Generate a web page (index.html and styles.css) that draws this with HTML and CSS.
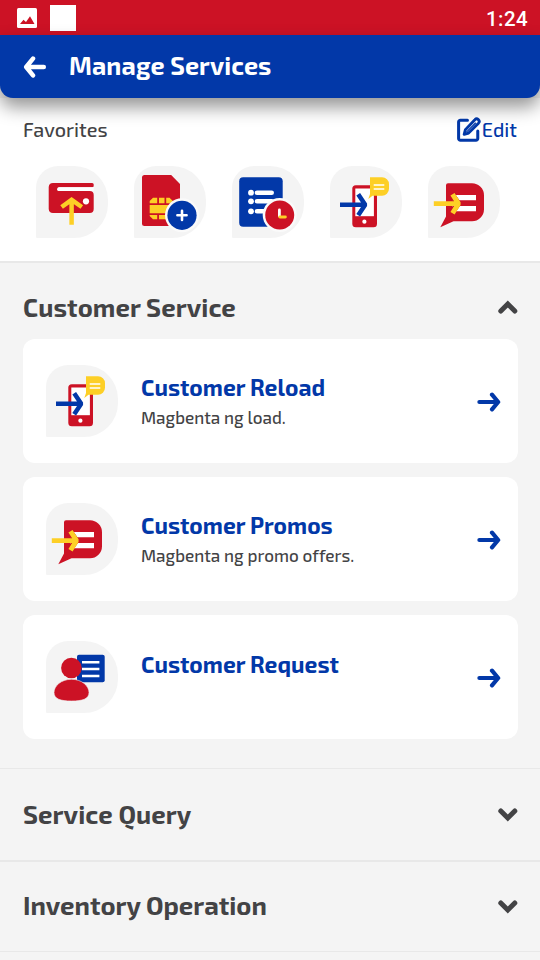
FILE: index.html
```html
<!DOCTYPE html>
<html lang="en">
<head>
<meta charset="utf-8">
<title>Manage Services</title>
<link rel="stylesheet" href="styles.css">
</head>
<body>
<svg class="sprite" aria-hidden="true">
  <symbol id="card" viewBox="0 0 72 72">
    <path fill="#cc1225" d="M17 17h39.200a1.500 1.500 0 0 1 1.500 1.500v1.300a1.500 1.500 0 0 1-1.500 1.500H23.200a1.900 1.900 0 0 0 0 3.800h30.500a4 4 0 0 1 4 4V43a4 4 0 0 1-4 4H17a4.300 4.300 0 0 1-4.300-4V21a4.300 4.300 0 0 1 4.300-4z"/>
    <path fill="#fff" d="M57.700 21.300H23.200a1.900 1.900 0 0 0 0 3.800h34.500z"/>
    <circle cx="50" cy="35.300" r="3.100" fill="#fff"/>
    <path fill="none" stroke="#fdcf26" stroke-width="4.500" d="M35.600 58.800V35M25.600 41l10-7.200 10.200 7.200"/>
  </symbol>
  <symbol id="sim" viewBox="0 0 72 72">
    <path fill="#cc1225" d="M10.500 9h26.700L46 18v39.500a2.500 2.500 0 0 1-2.500 2.500h-33A2.500 2.500 0 0 1 8 57.500V11.500A2.500 2.500 0 0 1 10.500 9z"/>
    <path fill="#fdcf26" d="M19 31.700h4.200v5.500h-7.500V35zM25 31.700h5.500v5.500H25zM32.200 31.700h3.300l3.300 3.300v2.200h-6.600zM15.700 39h24v8.300h-24zM15.700 49h7.500v4.200H19l-3.300-3.300zM25 49h8v4.200h-8z"/>
    <circle cx="48" cy="49.300" r="17" fill="#fafafa"/>
    <circle cx="48" cy="49.300" r="14.600" fill="#0238a8"/>
    <path stroke="#fff" stroke-width="2.600" stroke-linecap="round" d="M48 44.700v9.200M43.400 49.300h9.200"/>
  </symbol>
  <symbol id="list" viewBox="0 0 72 72">
    <rect x="7.200" y="11.300" width="43.500" height="49.400" rx="4" fill="#0238a8"/>
    <g fill="#fff"><circle cx="19" cy="26.700" r="2.900"/><circle cx="19" cy="35.300" r="2.900"/><circle cx="19" cy="45.300" r="2.900"/></g>
    <path stroke="#fff" stroke-width="4.600" stroke-linecap="round" d="M25 26.700h14.700M25 35.300h14.700M25 45.300h9"/>
    <circle cx="47.700" cy="49" r="17" fill="#fafafa"/>
    <circle cx="47.700" cy="49" r="14.500" fill="#cc1225"/>
    <path fill="none" stroke="#fff" stroke-width="2.800" stroke-linecap="round" d="M47.400 44v6"/>
    <path fill="none" stroke="#fdcf26" stroke-width="2.800" stroke-linecap="round" d="M47.800 51h5.600"/>
  </symbol>
  <symbol id="reload" viewBox="0 0 72 72">
    <rect x="22.300" y="19.200" width="24.700" height="42" rx="3.500" fill="#cc1225"/>
    <rect x="25.300" y="22.500" width="18.600" height="27.700" fill="#fff"/>
    <circle cx="34.400" cy="55.700" r="2.100" fill="#fff"/>
    <path fill="none" stroke="#0238a8" stroke-width="4.500" stroke-linejoin="bevel" d="M10 38.700h24M28.200 28.300l7 10.400-7 10.500"/>
    <path fill="#fdcf26" d="M40 11.300h12a7 7 0 0 1 7 7v4.400a7 7 0 0 1-7 7h-9.500L38.300 33l1.700-5z"/>
    <path stroke="#fff" stroke-width="1.700" d="M43.700 19h10.600M43.700 23h10.600"/>
  </symbol>
  <symbol id="promo" viewBox="0 0 72 72">
    <path fill="#cc1225" d="M20 17.300h24a12 12 0 0 1 12 12v14a12 12 0 0 1-12 12H25.500L12.300 61.200 18 50.500V19.300a2 2 0 0 1 2-2z"/>
    <path fill="#fff" d="M24 29h24v5.300H24zM24 40h24v5.200H24z"/>
    <path fill="none" stroke="#cc1225" stroke-width="6" d="M23.500 28l6.500 9.500-6.500 9.500"/>
    <path fill="none" stroke="#fdcf26" stroke-width="4.900" stroke-linejoin="bevel" d="M5.800 37.600H31M24.500 28.200l6 9.400-6 9.600"/>
  </symbol>
  <symbol id="request" viewBox="0 0 72 72">
    <rect x="31" y="13.700" width="27.700" height="27.600" rx="2" fill="#0238a8"/>
    <path stroke="#fff" stroke-width="2.400" d="M36 21.300h17.400M36 28h17.400M36 35h17.400"/>
    <circle cx="25.400" cy="27" r="10.300" fill="#cc1225"/>
    <path fill="#cc1225" stroke="#f4f4f4" stroke-width=".6" d="M25.500 38.300C36 38.300 43 45 43 51.500S36.500 60 25.500 60 8 58 8 51.500s7-13.200 17.500-13.200z"/>
  </symbol>
  <symbol id="arrow" viewBox="0 0 24 20">
    <path fill="none" stroke="currentColor" stroke-width="4.200" stroke-linecap="round" stroke-linejoin="round" d="M2.400 10H20M15 2.700l6.200 7.300-6.200 7.300"/>
  </symbol>
  <symbol id="back" viewBox="0 0 24 22">
    <path fill="none" stroke="currentColor" stroke-width="4.500" stroke-linecap="round" stroke-linejoin="round" d="M20.800 11H4M10 2.600L3.200 11l6.800 8.400"/>
  </symbol>
  <symbol id="chevron" viewBox="0 0 20 16">
    <path fill="none" stroke="currentColor" stroke-width="5" stroke-linecap="round" d="M2.800 4l7 7 7-7"/>
  </symbol>
</svg>

<div class="statusbar">
  <svg class="photo" viewBox="0 0 20 20"><rect width="20" height="20" rx="1.500" fill="#fff"/><path fill="#cc1225" d="M3 16l3.500-4.300L9 14l4-5.700L17.500 16z"/></svg>
  <span class="square"></span>
  <span class="clock">1:24</span>
</div>
<header class="appbar">
  <svg class="back"><use href="#back"/></svg>
  <h1>Manage Services</h1>
</header>
<section class="favorites">
  <div class="fav-head">
    <span class="fav-title">Favorites</span>
    <a class="edit"><svg viewBox="0 0 24 24"><path fill="none" stroke="currentColor" stroke-width="2.900" stroke-linecap="round" stroke-linejoin="round" d="M11 3.200H4.200a1.700 1.700 0 0 0-1.700 1.700v15.700a1.700 1.700 0 0 0 1.700 1.700h15a1.700 1.700 0 0 0 1.700-1.700V13.500"/><path fill="none" stroke="currentColor" stroke-width="2.700" stroke-linejoin="round" d="M18.100 2.700a2.300 2.300 0 0 1 3.500 3.200l-9.500 9.500-4.300 1.300 1.200-4.500z"/><path stroke="currentColor" stroke-width="1.300" d="M10 14.500l9-9"/></svg><span>Edit</span></a>
  </div>
  <div class="fav-list">
    <svg class="tile"><use href="#card"/></svg>
    <svg class="tile"><use href="#sim"/></svg>
    <svg class="tile"><use href="#list"/></svg>
    <svg class="tile"><use href="#reload"/></svg>
    <svg class="tile"><use href="#promo"/></svg>
  </div>
</section>
<section class="group open">
  <div class="group-head"><h2>Customer Service</h2><svg class="chev up"><use href="#chevron"/></svg></div>
  <div class="cards">
    <article class="card"><svg class="tile"><use href="#reload"/></svg><div class="copy"><h3>Customer Reload</h3><p>Magbenta ng load.</p></div><svg class="go"><use href="#arrow"/></svg></article>
    <article class="card"><svg class="tile"><use href="#promo"/></svg><div class="copy"><h3>Customer Promos</h3><p>Magbenta ng promo offers.</p></div><svg class="go"><use href="#arrow"/></svg></article>
    <article class="card"><svg class="tile"><use href="#request"/></svg><div class="copy solo"><h3>Customer Request</h3></div><svg class="go"><use href="#arrow"/></svg></article>
  </div>
</section>
<section class="group query"><div class="group-head"><h2>Service Query</h2><svg class="chev"><use href="#chevron"/></svg></div></section>
<section class="group inventory"><div class="group-head"><h2>Inventory Operation</h2><svg class="chev"><use href="#chevron"/></svg></div></section>
</body>
</html>
```
FILE: styles.css
```css
* { box-sizing: border-box; margin: 0; padding: 0; }
body { width: 540px; height: 960px; overflow: hidden; background: #f4f4f4; color: #434345; font-family: "Exo 2", "Noto Sans", sans-serif; font-variant-ligatures: none; white-space: nowrap; }
.sprite { position: absolute; width: 0; height: 0; }
svg { display: block; flex: none; }

.statusbar { height: 35px; background: #cc1225; display: flex; align-items: center; padding: 0 12px 0 17px; }
.photo { width: 20px; height: 20px; }
.square { width: 26px; height: 26px; margin-left: 13px; background: #fff; }
.clock { margin-left: auto; padding-top: 2px; color: #fff; font: 500 20.500px/24px Roboto, sans-serif; letter-spacing: .4px; }

.appbar { position: relative; height: 63px; background: #0238a8; border-radius: 0 0 13px 13px; box-shadow: 0 9px 18px rgba(0, 0, 0, .42); color: #fff; display: flex; align-items: center; padding-left: 23px; }
.back { width: 24px; height: 22px; margin-top: 1px; }
h1 { margin-left: 22px; margin-top: -3px; font-size: 25px; line-height: 32px; font-weight: 700; letter-spacing: .12px; }

.favorites { height: 165px; background: #fff; border-bottom: 2px solid #e8e8e8; padding: 17px 23px 0 23px; }
.fav-head { height: 28px; display: flex; align-items: center; justify-content: space-between; font-size: 19.800px; font-weight: 500; }
.edit { display: flex; align-items: center; gap: 1px; color: #0238a8; }
.edit svg { width: 25px; height: 25px; }
.fav-list { display: flex; gap: 26px; padding: 23px 0 0 13px; }
.tile { width: 72px; height: 72px; background: #f4f4f4; border-radius: 22px 34px 34px 1px; }

.group-head { display: flex; align-items: center; justify-content: space-between; padding: 0 22px 0 23px; height: 91px; }
h2 { margin-top: -2px; font-size: 25.600px; line-height: 34px; font-weight: 700; letter-spacing: .08px; }
.chev { width: 20px; height: 16px; }
.up { transform: scaleY(-1); margin-top: -2px; }
.open .group-head { height: 76px; padding-top: 14px; }
.cards { display: grid; gap: 14px; padding: 0 22px 29px 23px; }
.card { height: 124px; background: #fff; border-radius: 12px; display: flex; align-items: center; padding: 0 17px 0 23px; }
.copy { flex: 1; height: 124px; margin-left: 23px; padding-top: 33px; }
.solo { padding-top: 34px; }
h3 { color: #0238a8; font-size: 22.800px; line-height: 31px; font-weight: 700; }
p { font-size: 17.100px; line-height: 24px; margin-top: 2px; font-weight: 500; }
.go { width: 24px; height: 20px; color: #0238a8; margin-top: 2px; }
.query { border-top: 1px solid #e8e8e8; border-bottom: 2px solid #e8e8e8; height: 94px; }
.inventory { border-bottom: 1px solid #e8e8e8; height: 90px; }
.inventory .group-head { height: 89px; }
.inventory h2 { margin-top: -4px; letter-spacing: 0; }
```
